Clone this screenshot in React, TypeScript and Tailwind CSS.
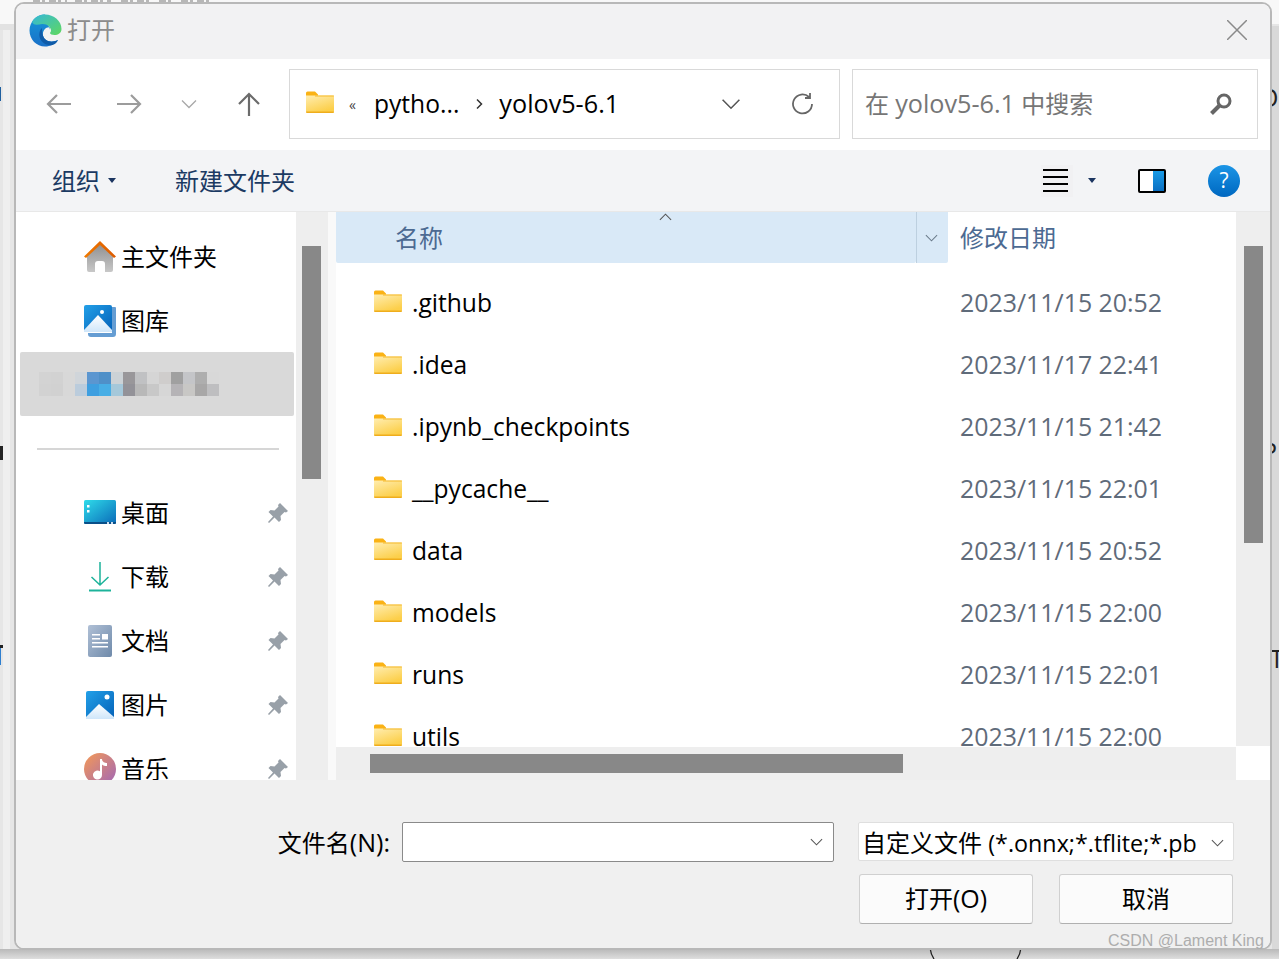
import type { ReactNode } from 'react';

const files = [
  { name: '.github', date: '2023/11/15 20:52' },
  { name: '.idea', date: '2023/11/17 22:41' },
  { name: '.ipynb_checkpoints', date: '2023/11/15 21:42' },
  { name: '__pycache__', date: '2023/11/15 22:01' },
  { name: 'data', date: '2023/11/15 20:52' },
  { name: 'models', date: '2023/11/15 22:00' },
  { name: 'runs', date: '2023/11/15 22:01' },
  { name: 'utils', date: '2023/11/15 22:00' },
];

// 打码区域的马赛克色块（两行，每格 12px）
const mosaicTop = ['#d3d3d3', '#d2d2d2', '#d8d8d8', '#d0d5da', '#5b96d0', '#4f90c8', '#ccd2d6', '#99979a', '#c0c1c3', '#d5d5d5', '#cfcdcc', '#a0a0a0', '#c4c5c8', '#aeaeae', '#d8d8d8'];
const mosaicBottom = ['#d2d2d2', '#d1d1d1', '#d8d8d8', '#bbccdc', '#3e9fe0', '#48aee5', '#a5c8da', '#939298', '#b8b8b8', '#c8c8c8', '#d6d6d6', '#b5b3b6', '#c8c7c5', '#a8a7a7', '#bebec0'];

const FolderIcon = () => (
  <svg width="28" height="22" viewBox="0 0 28 22" className="shrink-0 mb-[5px]">
    <defs>
      <linearGradient id="fold" x1="0" y1="0" x2="0.5" y2="1">
        <stop offset="0" stopColor="#ffedb0" />
        <stop offset="1" stopColor="#fccf4a" />
      </linearGradient>
    </defs>
    <path d="M0 2a1.500 1.500 0 0 1 1.500-1.500h7.500l3 3v3H0z" fill="#fab215" />
    <path d="M0 4.500h26.500a1.500 1.500 0 0 1 1.500 1.500v14a1.500 1.500 0 0 1-1.500 1.500h-25a1.500 1.500 0 0 1-1.500-1.500z" fill="url(#fold)" />
    <path d="M0 20.500h28v.5a1 1 0 0 1-1 1H1a1 1 0 0 1-1-1z" fill="#efad1c" />
    <path d="M9 4.500h19V5.500H9z" fill="#f5b92c" />
  </svg>
);

const EdgeIcon = () => (
  <svg width="33" height="33" viewBox="0 0 33 33" className="shrink-0">
    <defs>
      <linearGradient id="edgeGreen" x1="0" y1="0" x2="1" y2="1">
        <stop offset="0" stopColor="#35b8d8" />
        <stop offset="1" stopColor="#5fd85f" />
      </linearGradient>
      <linearGradient id="edgeBlue" x1="0" y1="0" x2="0" y2="1">
        <stop offset="0" stopColor="#1598d8" />
        <stop offset="1" stopColor="#1a70c8" />
      </linearGradient>
    </defs>
    <path d="M16 .5C7 .5.500 8 .500 16.500c0 9 7 16 15.500 16 5.500 0 10-2.500 13-6.500-3 1.500-9 2.500-12.500-.5-3-2.500-3.500-7-1-10 1.500-2 4-2.500 6-2-1 1-1 2-.5 2.500z" fill="url(#edgeBlue)" />
    <path d="M3 8C6 2.500 11 .5 16 .5c9 0 16.500 6.500 16.500 14.500 0 4-3.500 6-7 6-2.500 0-4.500-1-4.500-2 0-.5 1-1 1-2.500 0-3.500-4-7-9-6.500C9 10.500 5 12 3 8z" fill="url(#edgeGreen)" />
    <path d="M13 14c-3.500 3-3.500 9-.5 13 2 2.500 6 5 11 4 2.500-.5 4.500-2.500 5.500-5-4 2-9 2.500-12.500-.5-3-2.500-3.500-7.500-3.500-11.500z" fill="#0f5ba8" />
  </svg>
);

const HomeIcon = () => (
  <svg width="32" height="32" viewBox="0 0 32 32">
    <defs>
      <linearGradient id="homeBody" x1="0" y1="0" x2="0" y2="1">
        <stop offset="0" stopColor="#8f8f8f" />
        <stop offset="1" stopColor="#c8c8c8" />
      </linearGradient>
      <linearGradient id="homeRoof" x1="0" y1="0" x2="1" y2="0">
        <stop offset="0" stopColor="#f07a00" />
        <stop offset="1" stopColor="#dc5a00" />
      </linearGradient>
    </defs>
    <path d="M3 14 16 3l13 11v15a2 2 0 0 1-2 2h-6v-8a3 3 0 0 0-3-3h-4a3 3 0 0 0-3 3v8H5a2 2 0 0 1-2-2z" fill="url(#homeBody)" />
    <path d="M0 15.500 16 0l16 15.500-2 1.500L16 4 2 17z" fill="url(#homeRoof)" />
  </svg>
);

const PictureIcon = ({ stacked }: { stacked?: boolean }) => (
  <svg width="32" height="32" viewBox="0 0 32 32">
    <defs>
      <linearGradient id="picBg" x1="0" y1="0" x2="1" y2="1">
        <stop offset="0" stopColor="#22a0e8" />
        <stop offset="1" stopColor="#0561b8" />
      </linearGradient>
      <linearGradient id="picHill" x1="0" y1="0" x2="0" y2="1">
        <stop offset="0" stopColor="#ffffff" />
        <stop offset="1" stopColor="#cfe6fa" />
      </linearGradient>
    </defs>
    {stacked ? (
      <>
        <path d="M4 28h24V2h3a1 1 0 0 1 1 1v26a3 3 0 0 1-3 3H7a3 3 0 0 1-3-3z" fill="#3f85c8" opacity="0.8" />
        <rect x="0" y="0" width="28" height="27" rx="2" fill="url(#picBg)" />
        <path d="M0 25 14 10l14 15v2H0z" fill="url(#picHill)" />
        <circle cx="18" cy="7" r="2" fill="#fff" />
      </>
    ) : (
      <>
        <rect x="2" y="2" width="28" height="28" rx="2" fill="url(#picBg)" />
        <path d="M2 28 15 15l15 13v2H2z" fill="url(#picHill)" />
        <circle cx="23" cy="8" r="2.500" fill="#fff" />
      </>
    )}
  </svg>
);

const DesktopIcon = () => (
  <svg width="32" height="32" viewBox="0 0 32 32">
    <defs>
      <linearGradient id="deskBg" x1="0" y1="0" x2="1" y2="1">
        <stop offset="0" stopColor="#2fdcea" />
        <stop offset="1" stopColor="#0a6ab8" />
      </linearGradient>
    </defs>
    <rect x="0" y="3" width="32" height="24" rx="1.500" fill="url(#deskBg)" />
    <path d="M0 25h32v.5a1.500 1.500 0 0 1-1.500 1.500H1.500A1.500 1.500 0 0 1 0 25.500z" fill="#0a4f88" />
    <rect x="3" y="8" width="2.500" height="2.500" fill="#fff" />
    <rect x="3" y="13" width="2.500" height="2.500" fill="#fff" />
    <rect x="23" y="25" width="2" height="2" fill="#cde" />
    <rect x="27" y="25" width="2" height="2" fill="#cde" />
  </svg>
);

const DownloadIcon = () => (
  <svg width="32" height="32" viewBox="0 0 32 32" fill="none" stroke="#1db39a" strokeWidth="1.500">
    <path d="M16 1v23M7.500 16 16 24l8.500-8" />
    <path d="M5 29.500h22" strokeWidth="2" />
  </svg>
);

const DocIcon = () => (
  <svg width="32" height="32" viewBox="0 0 32 32">
    <defs>
      <linearGradient id="docBg" x1="0" y1="0" x2="1" y2="1">
        <stop offset="0" stopColor="#b0c0d6" />
        <stop offset="1" stopColor="#6f8aaa" />
      </linearGradient>
    </defs>
    <rect x="4" y="0" width="24" height="32" rx="2" fill="url(#docBg)" />
    <path d="M8 9h8v1.500H8zM8 13h8v1.500H8zM8 17h16v1.500H8zM8 21h16v1.500H8z" fill="#fff" />
    <rect x="18" y="9" width="6" height="5.500" fill="#fff" />
  </svg>
);

const MusicIcon = () => (
  <svg width="32" height="32" viewBox="0 0 32 32">
    <defs>
      <linearGradient id="musicBg" x1="0" y1="0" x2="1" y2="1">
        <stop offset="0" stopColor="#f59a55" />
        <stop offset="1" stopColor="#a066b8" />
      </linearGradient>
    </defs>
    <circle cx="16" cy="16" r="16" fill="url(#musicBg)" />
    <path d="M16 6h2c0 3 3 4 5 4v3c-2 0-4-.5-5-1.500V22a4.500 4.500 0 1 1-2-3.700z" fill="#fff" />
  </svg>
);

const PinIcon = () => (
  <svg width="22" height="22" viewBox="0 0 22 22" className="shrink-0">
    <path d="M13 1 21 9l-2 1.500-1.500-.5-4 4 .5 4-2 2-4.500-4.500L2 21l-1-1 5-5.500L1.500 10l2-2 4 .5 4-4-.5-1.500z" fill="#98a0a8" />
  </svg>
);

const NavItem = ({ icon, label, pinned }: { icon: ReactNode; label: string; pinned?: boolean }) => (
  <div className="h-16 shrink-0 flex items-center pl-[68px] pr-[7px]">
    <div className="w-8 h-8 shrink-0 flex items-center justify-center">{icon}</div>
    <span className="ml-[5px] flex-1 text-[24px] leading-8 text-black">{label}</span>
    {pinned && <PinIcon />}
  </div>
);

const Chevron = ({ className }: { className: string }) => (
  <svg viewBox="0 0 16 10" className={className} fill="none" stroke="currentColor" strokeWidth="1.300">
    <path d="M1 1.500 8 8.500l7-7" />
  </svg>
);

const Caret = () => (
  <svg width="8" height="5" viewBox="0 0 8 5">
    <path d="M0 0h8L4 5z" fill="#1b3560" />
  </svg>
);

export default function App() {
  const font = { fontFamily: '"Open Sans", "Noto Sans CJK SC", sans-serif' };

  return (
    <div className="relative w-[1279px] h-[959px] overflow-hidden bg-[#e6e6e6]" style={font}>
      {/* 背后的窗口残影 */}
      <div className="absolute left-0 top-0 w-full h-[24px] bg-[#f8f8f8]" />
      <div className="absolute left-0 top-[24px] w-[14px] h-[6px] bg-[#e2e2e2]" />
      <div className="absolute left-[3px] top-[30px] w-[7px] h-[920px] bg-[#efefef]" />
      <div className="absolute right-0 top-[26px] w-[7px] h-[924px] bg-[#d9d9d9]" />
      <div className="absolute left-0 bottom-0 w-full h-[10px] bg-gradient-to-b from-[#b9b9b9] to-[#dedede]" />
      <svg className="absolute left-[33px] top-0" width="178" height="2" fill="none" stroke="#777" strokeWidth="1">
        <path d="M0 1h34M42 1h36M88 1h28M126 1h14M148 1h28" strokeDasharray="7 2 3 4" />
      </svg>
      <div className="absolute left-0 top-[87px] w-[1px] h-[14px] bg-[#1f5f9f]" />
      <div className="absolute left-0 top-[446px] w-[3px] h-[14px] bg-[#222]" />
      <div className="absolute left-0 top-[645px] w-[3px] h-[3px] bg-[#222]" />
      <div className="absolute left-0 top-[648px] w-[1px] h-[17px] bg-[#2f7fcf]" />
      <div className="absolute left-[1259px] top-[82px] text-[25px] leading-[30px] font-medium text-[#222]">O</div>
      <div className="absolute left-[1262px] top-[436px] text-[25px] leading-[30px] font-medium text-[#222]">P</div>
      <div className="absolute left-[1270px] top-[643px] text-[25px] leading-[30px] font-medium text-[#222]">T</div>
      <svg className="absolute left-[925px] top-[948px]" width="100" height="11" fill="none" stroke="#222" strokeWidth="1.300">
        <path d="M5 0c.5 4 2 8 4 11M96 0c-.5 4-2 8-4 11" />
      </svg>

      {/* 对话框 */}
      <div className="absolute left-[14px] top-[2px] w-[1258px] h-[948px] flex flex-col overflow-hidden rounded-[10px] border-2 border-[#b8b8b8] bg-white">
        {/* 标题栏 */}
        <div className="h-[55px] shrink-0 flex items-center pl-[13px] pr-[23px] pb-[3px] bg-[#f2f2f3]">
          <EdgeIcon />
          <span className="ml-[5px] flex-1 text-[24px] text-[#8c8c8c]">打开</span>
          <svg width="20" height="20" viewBox="0 0 20 20" fill="none" stroke="#8a8a8a" strokeWidth="1.500">
            <path d="M0 0l20 20M20 0 0 20" />
          </svg>
        </div>

        {/* 地址栏 */}
        <div className="h-[91px] shrink-0 flex items-center bg-white pl-[30px] pb-[1px]">
          <svg width="26" height="22" viewBox="0 0 26 22" fill="none" stroke="#9c9c9c" strokeWidth="2.200">
            <path d="M25 11H2M11 2l-9 9 9 9" />
          </svg>
          <svg className="ml-[44px]" width="26" height="22" viewBox="0 0 26 22" fill="none" stroke="#9c9c9c" strokeWidth="2.200">
            <path d="M1 11h23M15 2l9 9-9 9" />
          </svg>
          <Chevron className="ml-[39px] w-4 h-2.5 text-[#a8a8a8]" />
          <svg className="ml-[40px]" width="24" height="24" viewBox="0 0 24 24" fill="none" stroke="#6b6b6b" strokeWidth="2.200">
            <path d="M12 24V2M2 12 12 2l10 10" />
          </svg>
          <div className="ml-[28px] w-[551px] h-[70px] flex items-center border border-[#d9d9d9] pl-4 pr-6">
            <FolderIcon />
            <span className="ml-[15px] text-[14px] text-[#444]">«</span>
            <span className="ml-[18px] text-[24.6px] text-black">pytho...</span>
            <svg className="ml-[16px]" width="9" height="12" viewBox="0 0 9 12" fill="none" stroke="#333" strokeWidth="1.500">
              <path d="m2 1.500 4.500 4.500L2 10.500" />
            </svg>
            <span className="ml-[15px] flex-1 text-[25.2px] text-black">yolov5-6.1</span>
            <Chevron className="w-[20px] h-3 text-[#555]" />
            <svg className="ml-[50px]" width="24" height="24" viewBox="0 0 24 24" fill="none" stroke="#666" strokeWidth="1.800">
              <path d="M21 12a9.500 9.500 0 1 1-3-7M19 1v5h-5" />
            </svg>
          </div>
          <div className="ml-[12px] w-[406px] h-[70px] flex items-center justify-between border border-[#d9d9d9] pl-3 pr-6">
            <span className="text-[24px] text-[#767676]">在 <span className="text-[25.2px]">yolov5-6.1</span> 中搜索</span>
            <svg width="24" height="24" viewBox="0 0 24 24" fill="none" stroke="#666">
              <circle cx="15" cy="9" r="6" strokeWidth="3" />
              <path d="M10.500 13.500 2.500 21.500" strokeWidth="4" />
            </svg>
          </div>
        </div>

        {/* 工具栏 */}
        <div className="h-[62px] shrink-0 flex items-center bg-[#f3f4f6] border-b border-[#e8e8e8] pl-[36px] pr-[30px]">
          <span className="text-[24px] text-[#1b3a63]">组织</span>
          <div className="ml-[8px]"><Caret /></div>
          <span className="ml-[59px] flex-1 text-[24px] text-[#1b3a63]">新建文件夹</span>
          <div className="w-8 h-8 flex flex-col justify-center gap-[5px] pl-[2px] pr-[5px] bg-[#f1f1f3]">
            <div className="h-[2px] bg-black" />
            <div className="h-[2px] bg-black" />
            <div className="h-[2px] bg-black" />
            <div className="h-[2px] bg-black" />
          </div>
          <div className="ml-[15px]"><Caret /></div>
          <div className="ml-[42px] w-[28px] h-6 flex overflow-hidden rounded-[2px] border-2 border-black bg-white">
            <div className="flex-1" />
            <div className="w-[11px] bg-gradient-to-b from-[#1a9be6] to-[#0a6fc2]" />
          </div>
          <div className="ml-[42px] w-8 h-8 flex items-center justify-center rounded-full bg-gradient-to-b from-[#1b95e6] to-[#0067c0] text-[21px] font-medium leading-none text-white">?</div>
        </div>

        {/* 主区域 */}
        <div className="h-[568px] shrink-0 flex">
          {/* 导航窗格 */}
          <div className="w-[280px] shrink-0 overflow-hidden flex flex-col pt-[13px]">
            <NavItem icon={<HomeIcon />} label="主文件夹" />
            <NavItem icon={<PictureIcon stacked />} label="图库" />
            <div className="relative h-16 shrink-0 ml-1 mr-[2px] -mt-px rounded-[2px] bg-[#d9d9d9] flex items-center pl-[19px]">
              <div className="flex flex-col">
                {[mosaicTop, mosaicBottom].map((row, rowIndex) => (
                  <div key={rowIndex} className="flex">
                    {row.map((c, i) => (
                      <div key={i} className="w-3 h-3" style={{ backgroundColor: c }} />
                    ))}
                  </div>
                ))}
              </div>
            </div>
            <div className="h-[65px] shrink-0 flex items-center pl-[21px] pr-[17px]">
              <div className="w-full h-[2px] bg-[#d6d6d6]" />
            </div>
            <NavItem icon={<DesktopIcon />} label="桌面" pinned />
            <NavItem icon={<DownloadIcon />} label="下载" pinned />
            <NavItem icon={<DocIcon />} label="文档" pinned />
            <NavItem icon={<PictureIcon />} label="图片" pinned />
            <NavItem icon={<MusicIcon />} label="音乐" pinned />
          </div>

          {/* 导航窗格滚动条 */}
          <div className="w-[32px] shrink-0 bg-[#eeeeee] pt-[34px] pl-[6px]">
            <div className="w-[19px] h-[233px] bg-[#888888]" />
          </div>
          <div className="w-[8px] shrink-0 bg-[#f9f9f9]" />

          {/* 文件列表 */}
          <div className="w-[900px] shrink-0 flex flex-col">
            <div className="h-[51px] shrink-0 flex">
              <div className="relative w-[580px] flex items-center pl-[59px] rounded-b-[2px] bg-[#d9e9f7] text-[24px] text-[#4c6a92]">
                名称
                <Chevron className="absolute left-[323px] top-[1px] w-[13px] h-[8px] rotate-180 text-[#555]" />
              </div>
              <div className="w-[32px] flex items-center justify-center pr-[3px] rounded-br-[2px] border-l border-[#bdd0e0] bg-[#d9e9f7]">
                <Chevron className="w-[13px] h-[8px] text-[#6b7b8b]" />
              </div>
              <div className="flex-1 flex items-center pl-[12px] text-[24px] text-[#4c6a92]">修改日期</div>
            </div>
            <div className="flex-1 min-h-0 overflow-hidden flex flex-col pt-[9px]">
              {files.map((f) => (
                <div key={f.name} className="h-[62px] shrink-0 flex items-center pl-[38px]">
                  <FolderIcon />
                  <span className="ml-[10px] w-[548px] text-[24.6px] text-black">{f.name}</span>
                  <span className="text-[24.9px] text-[#5f6b7a]">{f.date}</span>
                </div>
              ))}
            </div>
            <div className="h-[33px] shrink-0 bg-[#eeeeee] pl-[34px] pt-[7px]">
              <div className="w-[533px] h-[19px] bg-[#888888]" />
            </div>
          </div>

          {/* 文件列表滚动条 */}
          <div className="flex-1 flex flex-col">
            <div className="flex-1 bg-[#eeeeee] pt-[34px] pl-[8px]">
              <div className="w-[19px] h-[297px] bg-[#888888]" />
            </div>
            <div className="h-[34px] shrink-0 bg-white" />
          </div>
        </div>

        {/* 底部 */}
        <div className="flex-1 flex flex-col items-end bg-[#f0f0f0] pt-[42px] pr-[36px]">
          <div className="flex items-start">
            <span className="text-[24px] leading-10 text-black">文件名<span className="text-[25px]">(N):</span></span>
            <div className="ml-[12px] w-[432px] h-10 flex items-center justify-end pr-[10px] rounded-[2px] border border-[#8a8a8a] bg-white">
              <Chevron className="w-[13px] h-[8px] text-[#555]" />
            </div>
            <div className="ml-[24px] w-[376px] h-[39px] flex items-center justify-between pl-[3px] pr-[9px] pt-[2px] rounded-[2px] border border-[#dfdfdf] bg-white">
              <span className="w-[336px] overflow-hidden whitespace-nowrap text-[24px] text-black">自定义文件 <span className="text-[23.3px]">(*.onnx;*.tflite;*.pb</span></span>
              <Chevron className="w-[13px] h-[8px] text-[#555]" />
            </div>
          </div>
          <div className="mt-[11px] flex gap-[26px] pr-[1px]">
            <button className="w-[174px] h-[50px] rounded-[3px] border border-[#d0d0d0] border-b-[#b0b0b0] bg-[#fbfbfb] text-[24px] text-black">打开<span className="text-[25px]">(O)</span></button>
            <button className="w-[174px] h-[50px] rounded-[3px] border border-[#d0d0d0] border-b-[#b0b0b0] bg-[#fbfbfb] text-[24px] text-black">取消</button>
          </div>
        </div>
      </div>

      {/* 水印 */}
      <div className="absolute left-[1108px] top-[931px] text-[16px] leading-5 whitespace-nowrap text-[#adadad] [font-family:'Liberation_Sans',sans-serif]">CSDN @Lament King</div>
    </div>
  );
}
